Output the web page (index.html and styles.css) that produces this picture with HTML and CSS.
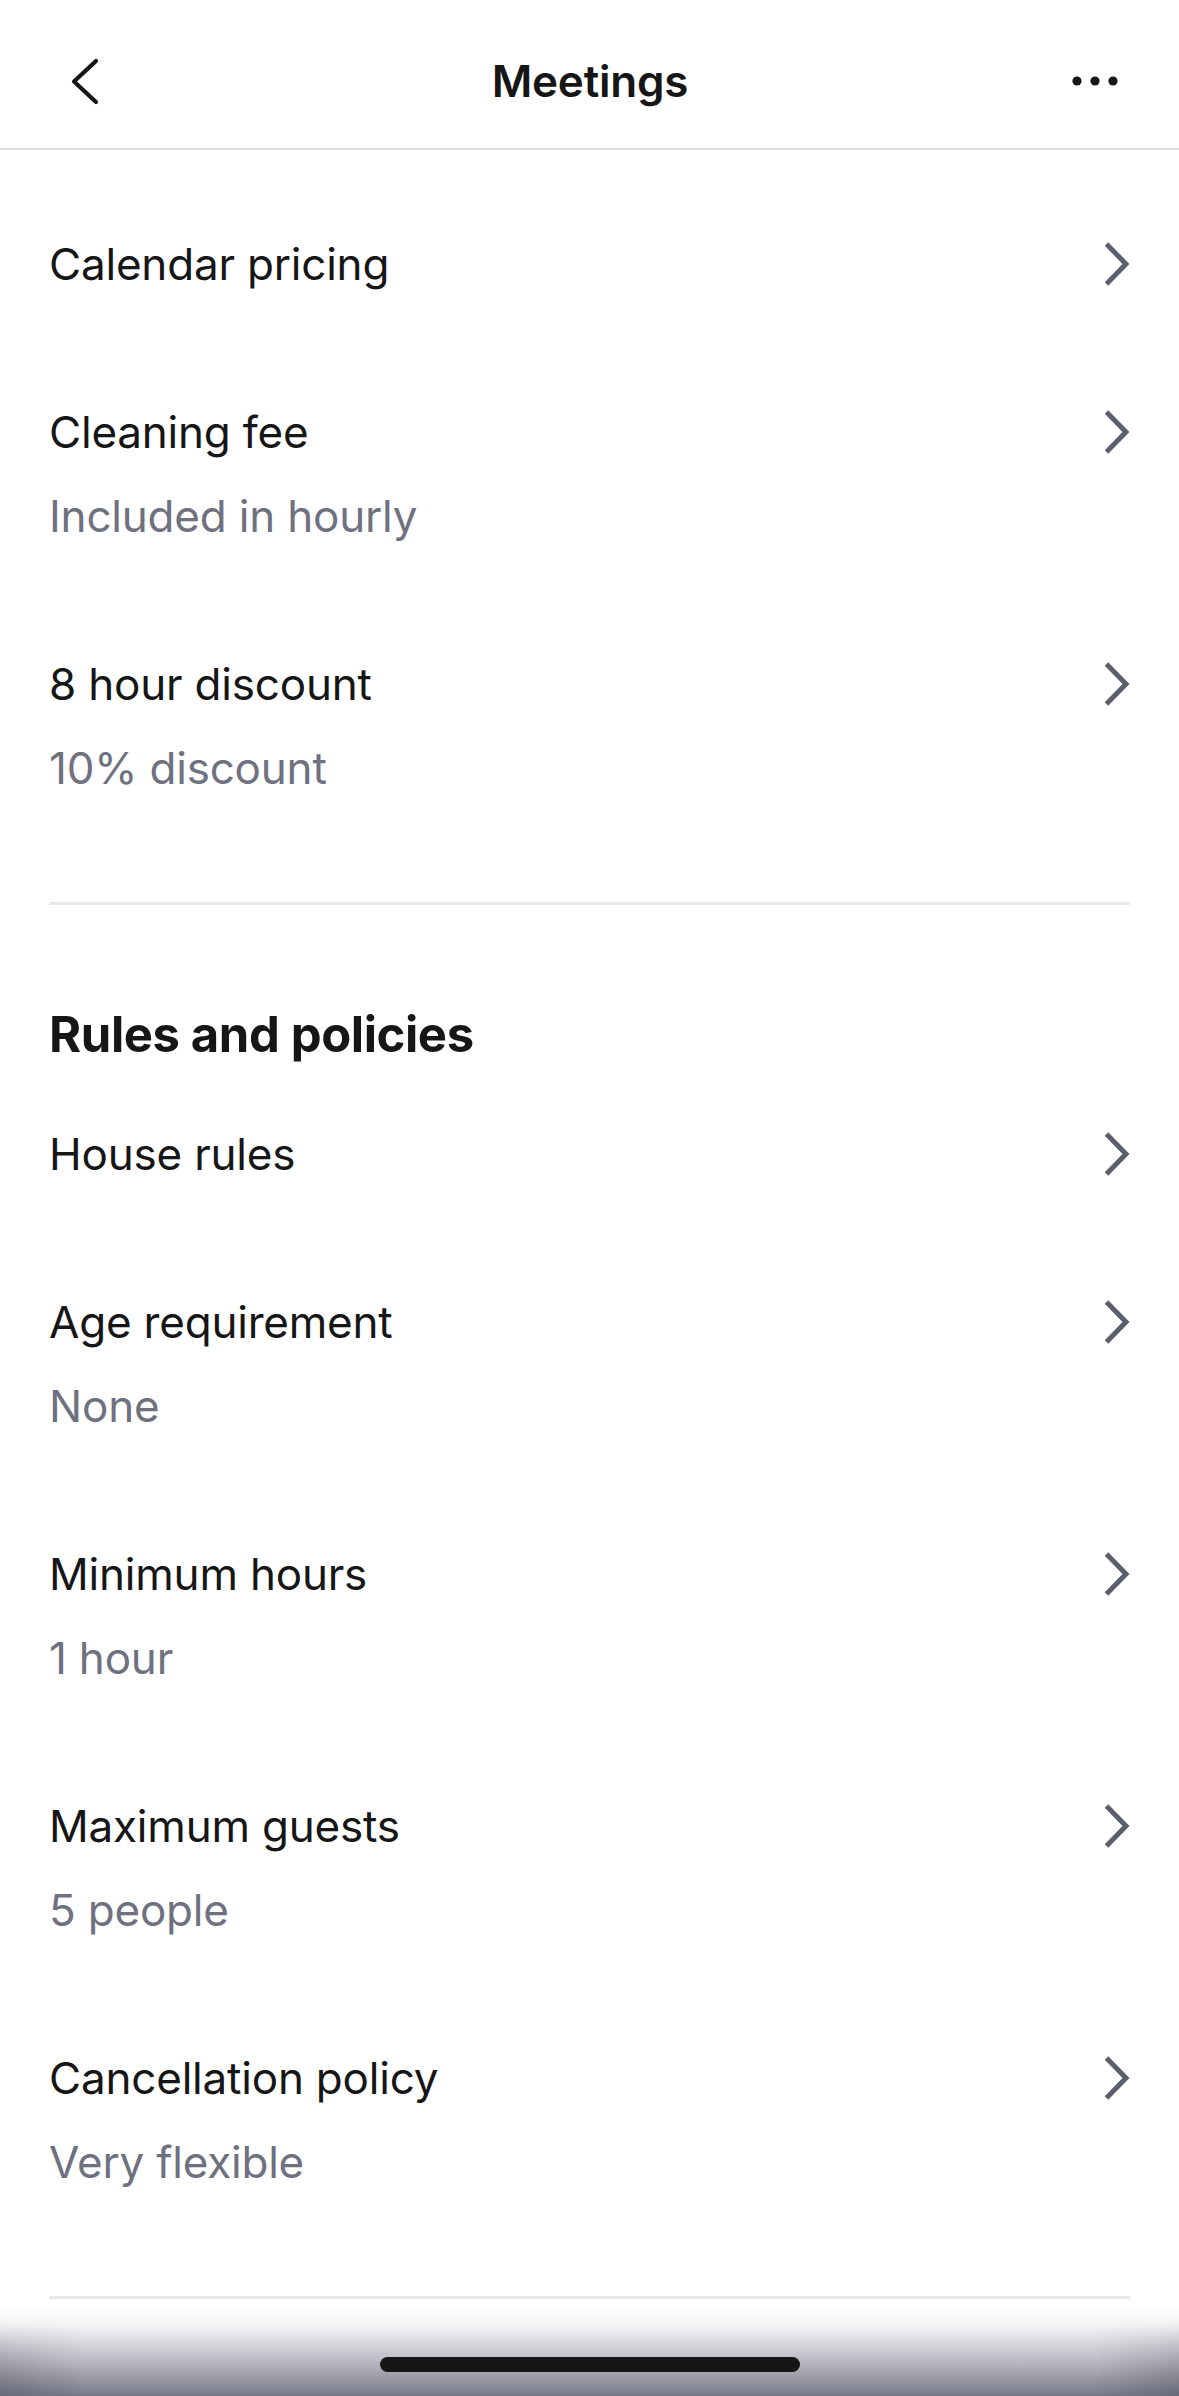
FILE: index.html
```html
<html lang="en">

<head>
    <meta charset="UTF-8">
    <meta name="viewport" content="width=device-width, initial-scale=1.0">
    <title>Meetings</title>
    <link rel="stylesheet" href="styles.css">
</head>

<body>
    <header class="topbar">
        <button class="icon-btn back" aria-label="Back">
            <svg width="30" height="48" viewBox="0 0 30 48">
                <path d="M26 4 L4 24.5 L26 45" fill="none" stroke="#161616" stroke-width="4.2" stroke-linecap="round" stroke-linejoin="round" />
            </svg>
        </button>
        <h1 class="title">Meetings</h1>
        <button class="icon-btn more" aria-label="More">
            <svg width="46" height="12" viewBox="0 0 46 12">
                <circle cx="5" cy="6" r="4.6" fill="#161616" />
                <circle cx="23" cy="6" r="4.6" fill="#161616" />
                <circle cx="41" cy="6" r="4.6" fill="#161616" />
            </svg>
        </button>
    </header>

    <main class="content">
        <section class="group">
            <div class="row">
                <div class="row-head">
                    <span class="row-title">Calendar pricing</span>
                    <svg class="chev" width="28" height="46" viewBox="0 0 28 46"><path d="M3.5 3 L23 23 L3.5 43" /></svg>
                </div>
            </div>
            <div class="row">
                <div class="row-head">
                    <span class="row-title">Cleaning fee</span>
                    <svg class="chev" width="28" height="46" viewBox="0 0 28 46"><path d="M3.5 3 L23 23 L3.5 43" /></svg>
                </div>
                <div class="row-sub">Included in hourly</div>
            </div>
            <div class="row">
                <div class="row-head">
                    <span class="row-title">8 hour discount</span>
                    <svg class="chev" width="28" height="46" viewBox="0 0 28 46"><path d="M3.5 3 L23 23 L3.5 43" /></svg>
                </div>
                <div class="row-sub">10% discount</div>
            </div>
        </section>

        <hr class="divider">

        <section class="group">
            <h2 class="group-heading">Rules and policies</h2>
            <div class="row">
                <div class="row-head">
                    <span class="row-title">House rules</span>
                    <svg class="chev" width="28" height="46" viewBox="0 0 28 46"><path d="M3.5 3 L23 23 L3.5 43" /></svg>
                </div>
            </div>
            <div class="row">
                <div class="row-head">
                    <span class="row-title">Age requirement</span>
                    <svg class="chev" width="28" height="46" viewBox="0 0 28 46"><path d="M3.5 3 L23 23 L3.5 43" /></svg>
                </div>
                <div class="row-sub">None</div>
            </div>
            <div class="row">
                <div class="row-head">
                    <span class="row-title">Minimum hours</span>
                    <svg class="chev" width="28" height="46" viewBox="0 0 28 46"><path d="M3.5 3 L23 23 L3.5 43" /></svg>
                </div>
                <div class="row-sub">1 hour</div>
            </div>
            <div class="row">
                <div class="row-head">
                    <span class="row-title">Maximum guests</span>
                    <svg class="chev" width="28" height="46" viewBox="0 0 28 46"><path d="M3.5 3 L23 23 L3.5 43" /></svg>
                </div>
                <div class="row-sub">5 people</div>
            </div>
            <div class="row">
                <div class="row-head">
                    <span class="row-title">Cancellation policy</span>
                    <svg class="chev" width="28" height="46" viewBox="0 0 28 46"><path d="M3.5 3 L23 23 L3.5 43" /></svg>
                </div>
                <div class="row-sub">Very flexible</div>
            </div>
        </section>

        <hr class="divider">
    </main>

    <div class="home-bar">
        <span class="home-indicator"></span>
    </div>
</body>

</html>
```

FILE: styles.css
```css
:root {
    --text: #161616;
    --muted: #6f717f;
    --chevron: #5e5f6d;
    --line: #e8e8e8;
    --side: 49px;
}

* {
    padding: 0;
    margin: 0;
    box-sizing: border-box;
}

body {
    font-family: Inter, "Noto Sans", "Liberation Sans", sans-serif;
    background-color: #ffffff;
    color: var(--text);
    width: 1179px;
    min-height: 2396px;
    overflow: hidden;
}

.topbar {
    height: 150px;
    padding: 14px 61px 0 70px;
    display: flex;
    align-items: center;
    justify-content: space-between;
    border-bottom: 2px solid #dedede;
}

.icon-btn {
    background: none;
    border: none;
    display: flex;
    align-items: center;
    justify-content: center;
}

.title {
    font-size: 44px;
    font-weight: 600;
    letter-spacing: -0.2px;
    margin-left: 8px;
}

.content {
    padding: 30px var(--side) 0;
}

.row {
    padding: 54px 0;
}

.row-head {
    height: 60px;
    display: flex;
    align-items: center;
    justify-content: space-between;
}

.row-title {
    font-size: 44px;
    font-weight: 400;
    letter-spacing: -0.2px;
}

.row-sub {
    margin-top: 24px;
    height: 60px;
    line-height: 60px;
    font-size: 44px;
    color: var(--muted);
    letter-spacing: -0.2px;
}

.chev {
    margin-right: -1px;
}

.chev path {
    fill: none;
    stroke: var(--chevron);
    stroke-width: 5;
    stroke-linejoin: miter;
}

.divider {
    border: none;
    height: 3px;
    background: var(--line);
    margin: 50px 0 100px;
}

.group-heading {
    font-size: 49px;
    font-weight: 700;
    letter-spacing: -0.4px;
    height: 60px;
    line-height: 60px;
    margin-bottom: 5px;
}

.home-bar {
    position: fixed;
    left: 0;
    right: 0;
    bottom: 0;
    height: 90px;
    display: flex;
    align-items: flex-end;
    justify-content: center;
    padding-bottom: 24px;
    background: linear-gradient(to bottom, rgba(255, 255, 255, 0), #f4f4f6 22%, #bbbcc4 60%, #777987);
}

.home-bar::before {
    content: "";
    position: absolute;
    inset: 0;
    background: linear-gradient(to right, rgba(80, 82, 96, 0.4), rgba(80, 82, 96, 0) 7%, rgba(80, 82, 96, 0) 93%, rgba(80, 82, 96, 0.4));
    -webkit-mask-image: linear-gradient(to bottom, transparent 15%, #000);
    mask-image: linear-gradient(to bottom, transparent 15%, #000);
}

.home-indicator {
    position: relative;
    width: 420px;
    height: 15px;
    border-radius: 8px;
    background: #161616;
}
```
